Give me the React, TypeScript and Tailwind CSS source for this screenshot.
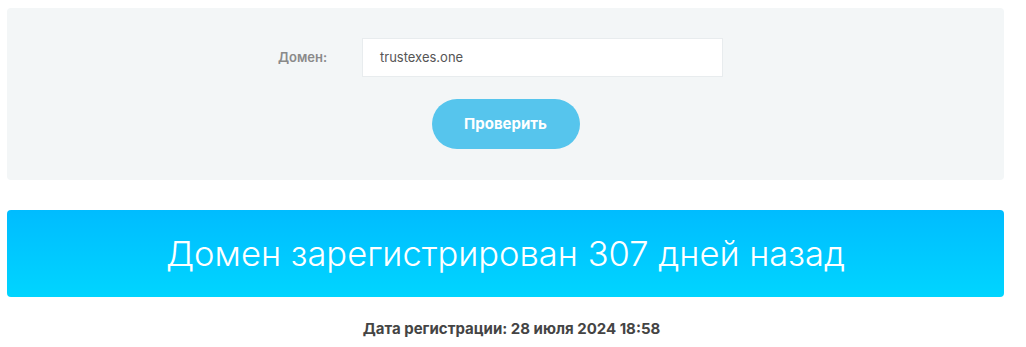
export default function App() {
  return (
    <div className="w-[1011px] px-[7px] pt-2 font-['Inter',sans-serif]">
      <section className="rounded bg-[#f3f6f7] pt-[30px] pb-[31px]">
        <div className="flex items-center pl-[271px]">
          <label className="w-[84px] text-[13px] font-semibold text-[#8a8a8a]">Домен:</label>
          <div className="flex h-[39px] w-[361px] items-center border border-[#e8ecee] bg-white px-[17px] text-[13px] text-[#555]">
            trustexes.one
          </div>
        </div>
        <div className="mt-[22px] flex justify-center">
          <button className="h-[50px] w-[148px] rounded-full bg-[#56c5ed] text-[15px] font-bold text-white">
            Проверить
          </button>
        </div>
      </section>

      <div className="mt-[30px] flex h-[87px] items-center justify-center rounded bg-gradient-to-b from-[#00bcff] to-[#00d5ff]">
        <h1 className="text-[34.5px] font-light text-white">Домен зарегистрирован 307 дней назад</h1>
      </div>

      <p className="mt-[21px] pl-[12px] text-center text-[15px] font-bold text-[#444]">
        Дата регистрации: 28 июля 2024 18:58
      </p>
    </div>
  );
}
